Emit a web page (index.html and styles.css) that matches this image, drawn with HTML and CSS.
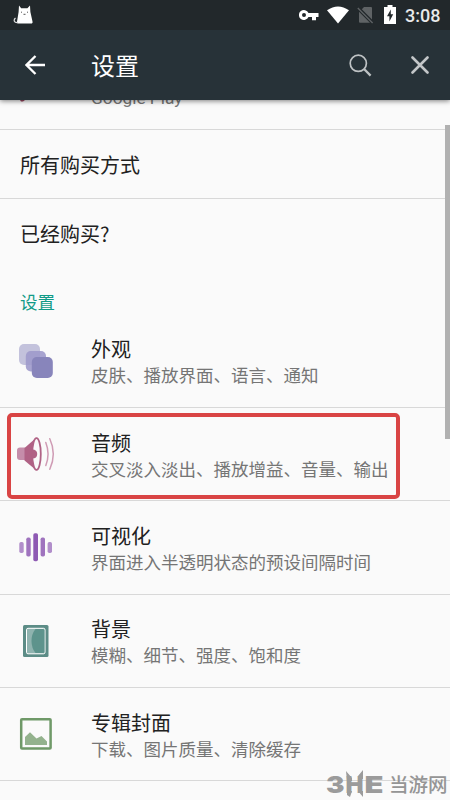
FILE: index.html
```html
<!DOCTYPE html>
<html lang="zh-CN">
<head>
<meta charset="utf-8">
<title>设置</title>
<link rel="stylesheet" href="styles.css">
</head>
<body>
<div class="screen">
  <header class="top">
    <div class="status">
      <svg class="cat" width="20" height="20" viewBox="0 0 20 20"><path d="M6 .5 8.200 3.200h6.200L17 .5l.4 6.500 2.100 9.500c.3 1.500-.2 2-1.500 2H5c-1 0-1.300-.5-1-1.700L5.600 7z" fill="#fff"/><path d="M5 17.500C1 18 .2 15 2.500 13" fill="none" stroke="#ddd" stroke-width="1.200"/><path d="M8 7.200h1M14 7.200h1M10.500 9.300h2" stroke="#555" stroke-width="1"/></svg>
      <div class="indicators">
        <svg class="key" width="20" height="12" viewBox="0 0 20 12"><path fill-rule="evenodd" d="M9.500 4A5 5 0 1 0 9.500 8H13v3.200h4V8h2.500V4zM5 4a2 2 0 1 1 0 4 2 2 0 0 1 0-4z" fill="#fff"/></svg>
        <svg class="wifi" width="22" height="18" viewBox="0 0 22 18"><path d="M0 4.200Q11-3.400 22 4.200L11 17.500z" fill="#fff"/></svg>
        <svg class="sim" width="17" height="18" viewBox="0 0 17 18"><path d="M7 1h7q1 0 1 1v11.500L4.800 3.200zM2 5.700 13 16.700H3q-1 0-1-1z" fill="#5f6365"/><path d="m.8 2 14.800 15" stroke="#5f6365" stroke-width="1.300"/></svg>
        <svg class="battery" width="12" height="19" viewBox="0 0 12 19"><path d="M3.500 0h5v2H12v17H0V2h3.500z" fill="#fff"/><path d="M6.800 4.500 3 11.300h2.400V16.500L9.200 9.200H6.800z" fill="#22282b"/></svg>
        <span class="time">3:08</span>
      </div>
    </div>
    <div class="bar">
      <svg class="back" width="20" height="20" viewBox="0 0 20 20"><path d="M20 10H2M10.500 1 1.500 10l9 9" fill="none" stroke="#fff" stroke-width="2.300"/></svg>
      <h1 class="title">设置</h1>
      <svg class="search" width="23" height="23" viewBox="0 0 23 23"><circle cx="9.300" cy="9.300" r="8.100" fill="none" stroke="#bec2c4" stroke-width="1.700"/><path d="m14.800 14.800 6.800 6.800" stroke="#bec2c4" stroke-width="2.300"/></svg>
      <svg class="close" width="18" height="18" viewBox="0 0 18 18"><path d="m1.500 1.500 15 15m0-15-15 15" stroke="#c3c6c8" stroke-width="2.600" stroke-linecap="round"/></svg>
    </div>
  </header>
  <main class="list">
    <div class="store"><svg class="store-icon" width="8" height="4" viewBox="0 0 8 4"><path d="M1 0h5L4 1.400H2z" fill="#9c4560"/></svg><span>Google Play</span></div>
    <div class="line">所有购买方式</div>
    <div class="line last">已经购买?</div>
    <h2 class="section">设置</h2>
    <div class="row first">
      <div class="icon"><svg width="40" height="40" viewBox="0 0 40 40"><rect x="3" y="3" width="21" height="21" rx="5" fill="#c3c2dc"/><rect x="9.800" y="10" width="20.200" height="20.500" rx="5" fill="#9e9acb" opacity=".9"/><rect x="15.800" y="16" width="21" height="21" rx="5" fill="#8885bb"/></svg></div>
      <div class="text"><div class="name">外观</div><div class="desc">皮肤、播放界面、语言、通知</div></div>
    </div>
    <div class="row">
      <div class="icon"><svg width="40" height="40" viewBox="0 0 40 40"><path d="M9 13.600H4q-3 0-3 3v6.500q0 3 3 3h5z" fill="#c58daa"/><path d="M8.500 14 20.500 3.500v33L8.500 26.500z" fill="#b06285"/><ellipse cx="20.500" cy="20" rx="4.300" ry="15.800" fill="#fafafa" stroke="#b06285" stroke-width="1.800"/><path d="M16.200 15.500q5 0 5 4.500t-5 4.500z" fill="#b06285"/><path d="M29.800 8.500q4.500 11.500 0 23M33.800 4.800q7 15.200 0 30.400" fill="none" stroke="#cf9bb4" stroke-width="1.500" stroke-linecap="round"/></svg></div>
      <div class="text"><div class="name">音频</div><div class="desc">交叉淡入淡出、播放增益、音量、输出</div></div>
    </div>
    <div class="row">
      <div class="icon"><svg width="40" height="40" viewBox="0 0 40 40"><g fill="#8e5ab3"><rect x="3.300" y="15" width="4.400" height="11" rx="1.700" opacity=".68"/><rect x="10.300" y="10.500" width="4.400" height="19" rx="1.700" opacity=".85"/><rect x="17.300" y="6.300" width="4.700" height="28" rx="1.700"/><rect x="24.600" y="10.500" width="4.400" height="19" rx="1.700" opacity=".85"/><rect x="31.600" y="15" width="4.400" height="11" rx="1.700" opacity=".68"/></g></svg></div>
      <div class="text"><div class="name">可视化</div><div class="desc">界面进入半透明状态的预设间隔时间</div></div>
    </div>
    <div class="row">
      <div class="icon"><svg width="40" height="40" viewBox="0 0 40 40"><rect x="7" y="4" width="25.500" height="32" rx="1.500" fill="#5c8c86"/><rect x="10.500" y="7.300" width="18.500" height="25.500" rx="1.500" fill="#8fb3af" stroke="#fff"/><path d="M19.500 8H27q1.500 0 1.500 1.500v21q0 1.500-1.500 1.500h-7.500q-4-5-4-12t4-12" fill="#5d938c"/></svg></div>
      <div class="text"><div class="name">背景</div><div class="desc">模糊、细节、强度、饱和度</div></div>
    </div>
    <div class="row">
      <div class="icon"><svg width="40" height="40" viewBox="0 0 40 40"><rect x="5.200" y="5.200" width="29.400" height="29.400" rx=".8" fill="#fafafa" stroke="#6f9968" stroke-width="2.500"/><path d="M9 31V23l5-4.800 6.500 6.300 5-2.500 5.500 5.500V31z" fill="#93b28d"/></svg></div>
      <div class="text"><div class="name">专辑封面</div><div class="desc">下载、图片质量、清除缓存</div></div>
    </div>
  </main>
  <div class="scrollbar"></div>
  <div class="highlight"></div>
  <div class="watermark">
    <svg width="60" height="28" viewBox="0 0 60 28"><g fill="#9b9b9b"><g class="mark"><text x="1" y="23" textLength="18.500" lengthAdjust="spacingAndGlyphs">3</text><text x="20.500" y="23" textLength="18" lengthAdjust="spacingAndGlyphs">H</text><text x="39.500" y="23" textLength="19" lengthAdjust="spacingAndGlyphs">E</text></g><path d="m21 1 6 7v3h-5zM38 0v9h-5V6zM22 21h5l-2 6-3-2zM33 21h5v6z"/></g></svg>
    <span>当游网</span>
  </div>
</div>
</body>
</html>
```
FILE: styles.css
```css
* { box-sizing: border-box; }
body { margin: 0; background: #fafafa; font-family: "Noto Sans CJK SC", sans-serif; color: #212121; }
svg { display: block; flex: none; }
.screen { position: relative; width: 450px; height: 800px; overflow: hidden; }
.top { position: relative; z-index: 2; height: 100px; background: #273238; box-shadow: 0 1px 5px rgba(0, 0, 0, .5); }
.status { display: flex; justify-content: space-between; height: 30px; padding: 5px 10px 0 13px; background: #22282b; }
.indicators { display: flex; align-items: flex-start; }
.key { margin: 4px 8px 0 0; }
.wifi { margin: 1px 8px 0 0; }
.sim { margin: 1px 10px 0 0; }
.battery { margin-right: 9px; }
.time { width: 35px; font: 500 18px/21px Roboto, sans-serif; color: #e9eaea; white-space: nowrap; }
.bar { display: flex; align-items: center; height: 70px; padding: 0 21px 0 25px; }
.title { margin: 0 auto 0 46px; font-size: 24px; line-height: 36px; font-weight: 400; color: #fff; }
.search { margin-right: 39px; }
.store { display: flex; height: 30px; padding-left: 19px; border-bottom: 1px solid #d8d8d8; font: 17.300px/20px Roboto, sans-serif; color: #757575; }
.store-icon { margin-right: 64px; }
.store span { margin-top: -12px; }
.line { height: 69px; padding: 0 20px; border-bottom: 1px solid #d8d8d8; font-size: 20px; line-height: 70px; }
.last { border-bottom: 0; }
.section { margin: 0; height: 46px; padding: 0 20px; font-size: 17.5px; line-height: 68px; font-weight: 400; color: #129b88; }
.row { display: flex; align-items: center; height: 93.300px; padding-left: 16px; border-bottom: 1px solid #d8d8d8; }
.first { height: 94px; }
.icon { width: 75px; }
.text { padding-top: 2px; }
.name { font-size: 20px; line-height: 27px; }
.desc { font-size: 17.5px; line-height: 26px; color: #757575; white-space: nowrap; }
.scrollbar { position: absolute; top: 125px; right: 0; width: 5px; height: 314px; background: #b1b1b1; }
.highlight { position: absolute; left: 7px; top: 413px; width: 393px; height: 86px; border: 4px solid #d94444; border-radius: 5px; }
.watermark { position: absolute; left: 325px; top: 770px; display: flex; align-items: center; gap: 4px; font-size: 19.500px; line-height: 28px; font-weight: 500; color: #959595; white-space: nowrap; }
.mark { font: 900 23px Inter, sans-serif; }
```
